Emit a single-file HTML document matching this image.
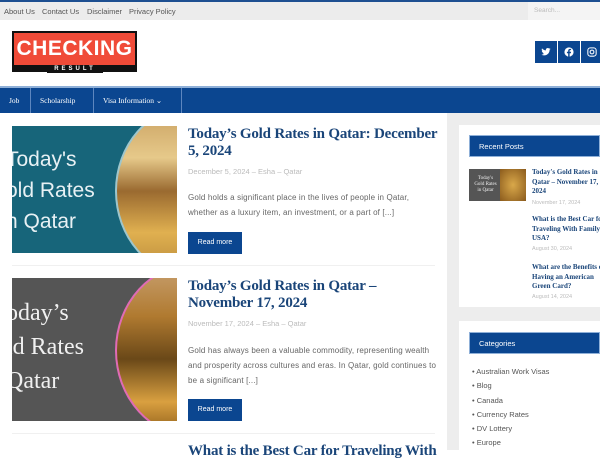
<!DOCTYPE html>
<html><head><style>
*{margin:0;padding:0;box-sizing:border-box}
body{width:600px;height:450px;overflow:hidden;background:#fff;font-family:"Liberation Sans",sans-serif;position:relative}
.abs{position:absolute}
.top{left:0;top:0;width:600px;height:20px;background:#ececec;border-top:2px solid #1d4f91}
.top span{position:absolute;top:5px;font-size:7.5px;color:#555}
.nav{left:0;top:86px;width:600px;height:27px;background:#0b4690;border-top:2px solid #8fb0d8}
.nav span{position:absolute;top:8px;font-size:7.5px;color:#fff;font-family:"Liberation Serif",serif}
.sep{position:absolute;top:0;width:1px;height:25px;background:#5d86bf}
.title{font-family:"Liberation Serif",serif;font-weight:bold;color:#1a4579;font-size:15px;line-height:17px;letter-spacing:-0.2px}
.meta{font-size:7.5px;color:#bbb}
.ex{font-size:8px;color:#666;line-height:15px;letter-spacing:0.15px}
.btn{background:#0b4690;color:#fff;font-size:7px;width:54px;height:22px;line-height:22px;text-align:center}
.wh{background:#fff}
.wt{background:#0b4690;color:#fff;font-size:7.5px;height:22px;line-height:22px;padding-left:9px;border:1px solid #8fb0d8}
.rp{font-family:"Liberation Serif",serif;font-weight:bold;font-size:7px;color:#1a4579;line-height:9.5px;white-space:nowrap}
.rd{font-size:5.5px;color:#bbb}
.cat{font-size:7.5px;color:#555;line-height:14.3px}
</style></head><body>
<div class="abs top">
<span style="left:4px">About Us</span><span style="left:42px">Contact Us</span><span style="left:87px">Disclaimer</span><span style="left:129px">Privacy Policy</span>
<div style="position:absolute;left:528px;top:0;width:72px;height:18px;background:#f4f4f4"></div>
<span style="left:534px;color:#bbb;font-size:6.5px">Search...</span>
</div>
<div class="abs" style="left:12px;top:31px;width:125px;height:41px;background:#111"></div>
<div class="abs" style="left:14px;top:33px;width:121px;height:32px;background:#f04b38;color:#fff;font-weight:bold;font-size:21px;line-height:32px;text-align:center;letter-spacing:0.5px">CHECKING</div>
<div class="abs" style="left:47px;top:65px;width:56px;height:8px;background:#111;color:#fff;font-size:6px;line-height:8px;text-align:center;letter-spacing:3px;font-weight:bold">RESULT</div>
<div class="abs" style="left:535px;top:41px;width:22px;height:22px;background:#0b4690">
<svg width="10" height="10" viewBox="0 0 24 24" style="margin:6px"><path fill="#fff" d="M23 4.6a9 9 0 0 1-2.6.7 4.6 4.6 0 0 0 2-2.5 9 9 0 0 1-2.9 1.1A4.5 4.5 0 0 0 11.8 8 12.8 12.8 0 0 1 2.5 3.2a4.5 4.5 0 0 0 1.4 6 4.5 4.5 0 0 1-2-.6v.1a4.5 4.5 0 0 0 3.6 4.4 4.5 4.5 0 0 1-2 .1 4.5 4.5 0 0 0 4.2 3.1A9 9 0 0 1 1 18.2 12.8 12.8 0 0 0 7.9 20c8.3 0 12.8-6.9 12.8-12.8v-.6A9 9 0 0 0 23 4.6z"/></svg></div>
<div class="abs" style="left:558px;top:41px;width:22px;height:22px;background:#0b4690"><svg width="10" height="10" viewBox="0 0 24 24" style="margin:6px"><circle cx="12" cy="12" r="11" fill="#fff"/><path fill="#0b4690" d="M13.5 24v-9h3l.5-3.5h-3.5V9.3c0-1 .3-1.7 1.8-1.7H17V4.5c-.3 0-1.4-.1-2.6-.1-2.6 0-4.4 1.6-4.4 4.5v2.6H7V15h3v9z"/></svg></div>
<div class="abs" style="left:581px;top:41px;width:22px;height:22px;background:#0b4690"><svg width="10" height="10" viewBox="0 0 24 24" style="margin:6px"><rect x="2" y="2" width="20" height="20" rx="6" fill="none" stroke="#fff" stroke-width="2.5"/><circle cx="12" cy="12" r="4.5" fill="none" stroke="#fff" stroke-width="2.5"/></svg></div>
<div class="abs nav">
<span style="left:9px">Job</span><div class="sep" style="left:30px"></div>
<span style="left:40px">Scholarship</span><div class="sep" style="left:93px"></div>
<span style="left:103px">Visa Information ⌄</span><div class="sep" style="left:181px"></div>
</div>
<div class="abs" style="left:447px;top:113px;width:153px;height:337px;background:#ededed"></div>
<div class="abs wh" style="left:459px;top:125px;width:141px;height:182px"></div>
<div class="abs wt" style="left:469px;top:135px;width:131px">Recent Posts</div>
<div class="abs" style="left:469px;top:169px;width:57px;height:32px;background:#555;color:#eee;font-family:'Liberation Serif',serif;font-size:5px;text-align:center;line-height:6px;padding-top:7px;padding-right:24px">Today's<br>Gold Rates<br>in Qatar</div>
<div class="abs" style="left:500px;top:169px;width:26px;height:32px;background:radial-gradient(#d9a84a,#8a5a1c)"></div>
<div class="abs rp" style="left:532px;top:168px">Today's Gold Rates in<br>Qatar – November 17,<br>2024</div>
<div class="abs rd" style="left:532px;top:200px">November 17, 2024</div>
<div class="abs rp" style="left:532px;top:215px">What is the Best Car for<br>Traveling With Family<br>USA?</div>
<div class="abs rd" style="left:532px;top:246px">August 30, 2024</div>
<div class="abs rp" style="left:532px;top:263px">What are the Benefits of<br>Having an American<br>Green Card?</div>
<div class="abs rd" style="left:532px;top:294px">August 14, 2024</div>
<div class="abs wh" style="left:459px;top:321px;width:141px;height:129px"></div>
<div class="abs wt" style="left:469px;top:332px;width:131px">Categories</div>
<div class="abs cat" style="left:472px;top:365px">
• Australian Work Visas<br>• Blog<br>• Canada<br>• Currency Rates<br>• DV Lottery<br>• Europe</div>
<div class="abs" style="left:12px;top:126px;width:165px;height:127px;background:#17657a;overflow:hidden">
<div style="position:absolute;left:-6px;top:18px;color:#e8f1f4;font-size:21px;line-height:31px">Today's<br>old Rates<br>n Qatar</div>
<div style="position:absolute;left:103px;top:-20px;width:150px;height:170px;border-radius:50%;background:linear-gradient(180deg,#c9a060,#e6c98a 30%,#9a6a30 50%,#e0b050 75%,#b88a3a);border:2px solid #9ec6cc"></div>
</div>
<div class="abs title" style="left:188px;top:126px;width:262px">Today’s Gold Rates in Qatar: December 5, 2024</div>
<div class="abs meta" style="left:188px;top:167px">December 5, 2024 – Esha – Qatar</div>
<div class="abs ex" style="left:188px;top:190px;width:250px">Gold holds a significant place in the lives of people in Qatar, whether as a luxury item, an investment, or a part of [...]</div>
<div class="abs btn" style="left:188px;top:232px">Read more</div>
<div class="abs" style="left:12px;top:265px;width:423px;height:1px;background:#f0f0f0"></div>
<div class="abs" style="left:12px;top:278px;width:165px;height:143px;background:#555;overflow:hidden">
<div style="position:absolute;left:-6px;top:18px;color:#f0f0f0;font-family:'Liberation Serif',serif;font-size:24px;line-height:34px">oday’s<br>ld Rates<br>Qatar</div>
<div style="position:absolute;left:103px;top:-15px;width:160px;height:175px;border-radius:50%;background:linear-gradient(180deg,#c8a070,#b07a30 30%,#6a4818 55%,#d9a040 80%,#8a5a18);border:2px solid #e06bb5"></div>
</div>
<div class="abs title" style="left:188px;top:278px;width:250px">Today’s Gold Rates in Qatar – November 17, 2024</div>
<div class="abs meta" style="left:188px;top:319px">November 17, 2024 – Esha – Qatar</div>
<div class="abs ex" style="left:188px;top:343px;width:250px">Gold has always been a valuable commodity, representing wealth and prosperity across cultures and eras. In Qatar, gold continues to be a significant [...]</div>
<div class="abs btn" style="left:188px;top:399px">Read more</div>
<div class="abs" style="left:12px;top:433px;width:423px;height:1px;background:#f0f0f0"></div>
<div class="abs title" style="left:188px;top:443px;width:260px;white-space:nowrap">What is the Best Car for Traveling With</div>
</body></html>
